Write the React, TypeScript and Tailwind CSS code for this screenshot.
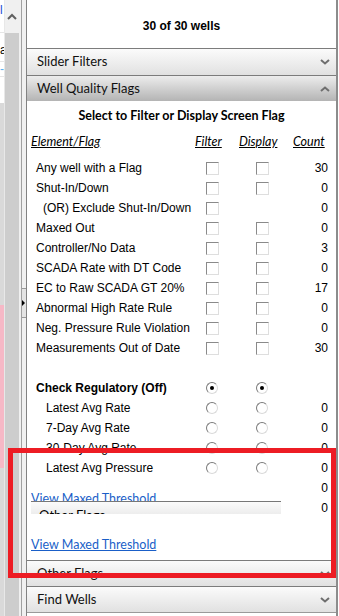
import React from "react";

type FlagRow = {
  label: string;
  indent?: "or" | "sub";
  filter?: boolean;
  display?: boolean;
  count?: string;
};

const flags: FlagRow[] = [
  { label: "Any well with a Flag", filter: true, display: true, count: "30" },
  { label: "Shut-In/Down", filter: true, display: true, count: "0" },
  { label: "(OR) Exclude Shut-In/Down", indent: "or", filter: true, count: "0" },
  { label: "Maxed Out", filter: true, display: true, count: "0" },
  { label: "Controller/No Data", filter: true, display: true, count: "3" },
  { label: "SCADA Rate with DT Code", filter: true, display: true, count: "0" },
  { label: "EC to Raw SCADA GT 20%", filter: true, display: true, count: "17" },
  { label: "Abnormal High Rate Rule", filter: true, display: true, count: "0" },
  { label: "Neg. Pressure Rule Violation", filter: true, display: true, count: "0" },
  { label: "Measurements Out of Date", filter: true, display: true, count: "30" },
];

const regulatory = ["Latest Avg Rate", "7-Day Avg Rate", "30-Day Avg Rate", "Latest Avg Pressure"];

function Chevron({ up }: { up?: boolean }) {
  return (
    <svg width="10" height="6" viewBox="0 0 10 6" className="mr-[4px]">
      <polyline
        points={up ? "1,5 5,1.5 9,5" : "1,1 5,4.5 9,1"}
        fill="none"
        stroke="#6e6e6e"
        strokeWidth="2"
      />
    </svg>
  );
}

function Bar({ title, open, h = 26 }: { title: string; open?: boolean; h?: number }) {
  return (
    <div
      className={
        "flex items-center justify-between border-t border-[#7c7c7c] pl-[10px] pr-[2px] font-['Lato',sans-serif] text-[13px] text-[#111] " +
        (open ? "bg-gradient-to-b from-[#ededed] to-[#b4b4b4]" : "bg-gradient-to-b from-[#fbfbfb] to-[#e1e1e1]")
      }
      style={{ height: h }}
    >
      <span>{title}</span>
      <Chevron up={open} />
    </div>
  );
}

function Check() {
  return (
    <div className="h-[13px] w-[13px] border border-t-[#8a8a8a] border-l-[#8a8a8a] border-b-[#dedede] border-r-[#dedede] bg-white" />
  );
}

function Radio({ on }: { on?: boolean }) {
  return (
    <div className="flex h-[12px] w-[12px] items-center justify-center rounded-full border border-t-[#7a7a7a] border-l-[#7a7a7a] border-b-[#dadada] border-r-[#dadada] bg-white">
      {on && <div className="h-[4px] w-[4px] rounded-full bg-black" />}
    </div>
  );
}

function Row({ label, indent, filter, display, count, radio, on, bold }: FlagRow & { radio?: boolean; on?: boolean; bold?: boolean }) {
  const pad = indent === "or" ? "pl-[7px] " : indent === "sub" ? "pl-[10px] " : "";
  return (
    <div className="flex h-[20px] items-center pl-[9px]">
      <div className={"w-[170px] " + pad + (bold ? "font-bold" : "")}>{label}</div>
      <div className="w-[13px]">{filter && (radio ? <Radio on={on} /> : <Check />)}</div>
      <div className="w-[37px]" />
      <div className="w-[13px]">{display && (radio ? <Radio on={on} /> : <Check />)}</div>
      <div className="w-[59px] text-right">{count}</div>
    </div>
  );
}

export default function App() {
  return (
    <div className="relative flex h-[616px] w-[339px] overflow-hidden bg-white font-['Liberation_Sans',Arial,sans-serif] text-[12px] text-black">
      {/* cut-off page content on the left */}
      <div className="flex w-[4px] flex-col bg-[#d9d9d9]">
        <div className="h-[103px] bg-white text-[12px] leading-[14px]">
          <div className="h-[33px] border-b border-[#e6e6e6] pt-[3px] text-[#1b4fd6]">l</div>
          <div className="h-[29px] border-b border-[#e6e6e6] pt-[10px]">a</div>
          <div className="h-[15px] border-b border-[#e6e6e6] text-[#5ab0f0]">-</div>
        </div>
        <div className="h-[202px]" />
        <div className="h-[163px] bg-[#f6b8c6]" />
      </div>
      <div className="w-px bg-[#e8e8e8]" />
      {/* scrollbar */}
      <div className="flex w-[14px] flex-col">
        <div className="flex h-[33px] items-center justify-center bg-[#f0f0f0]">
          <svg width="10" height="7" viewBox="0 0 10 7">
            <polyline points="1,6 5,2 9,6" fill="none" stroke="#606060" strokeWidth="2" />
          </svg>
        </div>
        <div className="flex-1 bg-[#cdcdcd]" />
      </div>
      <div className="w-[2px] bg-[#f0f0f0]" />
      <div className="w-px bg-[#a0a0a0]" />
      {/* splitter */}
      <div className="flex w-[4px] flex-col bg-[#f0f0f0]">
        <div className="h-[288px]" />
        <div className="flex h-[30px] items-center border-y border-[#9a9a9a] bg-[#e4e4e4]">
          <div className="h-0 w-0 border-y-[3px] border-l-[3px] border-y-transparent border-l-black" />
        </div>
      </div>
      <div className="w-px bg-[#828282]" />

      {/* panel */}
      <div className="flex w-[309px] flex-col">
        <div className="flex h-[48px] items-center justify-center pt-[4px] text-[12px] font-bold">30 of 30 wells</div>
        <Bar title="Slider Filters" h={27} />
        <Bar title="Well Quality Flags" open h={26} />
        <div className="flex flex-col pt-[5px]">
          <div className="flex h-[20px] items-center justify-center font-['Lato',sans-serif] text-[12.5px] font-bold">
            Select to Filter or Display Screen Flag
          </div>
          <div className="mt-[6px] flex h-[20px] items-center font-['Lato',sans-serif] text-[12.5px] italic underline">
            <span className="w-[168px] pl-[4px]">Element/Flag</span>
            <span className="w-[44px]">Filter</span>
            <span className="w-[54px]">Display</span>
            <span>Count</span>
          </div>
          <div className="mt-[6px] flex flex-col">
            {flags.map((f) => (
              <Row key={f.label} {...f} />
            ))}
            <div className="h-[20px]" />
            <Row label="Check Regulatory (Off)" bold radio on filter display />
            {regulatory.map((r) => (
              <Row key={r} label={r} indent="sub" radio filter display count="0" />
            ))}
            <div className="relative">
              <Row label="" count="0" />
              <Row label="" count="0" />
              {/* stale repaint of the lower part of the section */}
              <div className="absolute left-[4px] top-[12px] w-[250px]">
                <div className="h-[12px] overflow-hidden border-b border-[#777] font-['Lato',sans-serif] text-[12.5px] leading-[17px] text-[#1a5fc8] underline">
                  View Maxed Threshold
                </div>
                <div className="h-[12px] overflow-hidden bg-gradient-to-b from-[#fbfbfb] to-[#ededed] pl-[8px] font-['Lato',sans-serif] text-[13px] leading-[27px]">
                  Other Flags
                </div>
              </div>
            </div>
          </div>
          <div className="mt-[18px] h-[17px] pl-[4px] font-['Lato',sans-serif] text-[12.5px] leading-[17px] text-[#1a5fc8] underline">
            View Maxed Threshold
          </div>
        </div>
        <div className="mt-[7px]">
          <Bar title="Other Flags" />
          <Bar title="Find Wells" />
        </div>
        <div className="border-t border-[#9a9a9a]" />
      </div>
      <div className="w-[2px] bg-[#8c8c8c]" />
      <div className="flex-1 bg-white" />

      {/* annotation box */}
      <div className="pointer-events-none absolute left-[8px] top-[448px] h-[130px] w-[328px] border-[5px] border-[#ed1c24]" />
    </div>
  );
}
